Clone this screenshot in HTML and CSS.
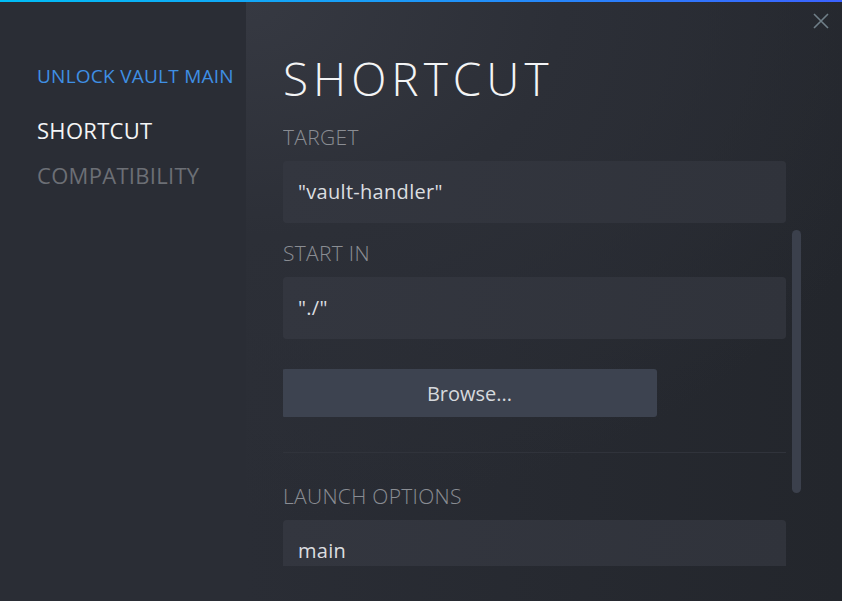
FILE: index.html
```html
<!DOCTYPE html>
<html>
<head>
<meta charset="utf-8">
<link rel="stylesheet" href="styles.css">
</head>
<body>
<div class="window">
  <div class="accent"></div>
  <div class="body">
    <nav class="sidebar">
      <div class="nav-title">UNLOCK VAULT MAIN</div>
      <div class="nav-item active">SHORTCUT</div>
      <div class="nav-item">COMPATIBILITY</div>
    </nav>
    <main class="main">
      <h1 class="title">SHORTCUT</h1>
      <div class="scroll">
        <div class="content">
          <div class="field">
            <div class="label">TARGET</div>
            <div class="input">"vault-handler"</div>
          </div>
          <div class="field">
            <div class="label">START IN</div>
            <div class="input">"./"</div>
          </div>
          <button class="browse">Browse...</button>
          <div class="divider"></div>
          <div class="field launch">
            <div class="label">LAUNCH OPTIONS</div>
            <div class="input">main</div>
          </div>
        </div>
        <div class="track"><div class="thumb"></div></div>
      </div>
    </main>
  </div>
  <button class="close" aria-label="Close">
    <svg width="16" height="16" viewBox="0 0 16 16"><path d="M1 1 L15 15 M15 1 L1 15" stroke="#6f7f88" stroke-width="1.6" fill="none"/></svg>
  </button>
</div>
</body>
</html>
```
FILE: styles.css
```css
* { box-sizing: border-box; }
html, body { margin: 0; padding: 0; }
body {
  width: 842px;
  height: 601px;
  overflow: hidden;
  background: #24272e;
  font-family: "Open Sans", "Noto Sans", sans-serif;
}
.window {
  position: relative;
  width: 842px;
  height: 601px;
  display: flex;
  flex-direction: column;
}
.accent {
  height: 2px;
  flex: none;
  background: linear-gradient(90deg, #00bdf5 0%, #1a9cf8 45%, #3b62ff 100%);
}
.body {
  flex: 1;
  display: flex;
  min-height: 0;
}
.sidebar {
  width: 246px;
  flex: none;
  background: #2a2d35;
  padding: 59px 0 0 37px;
}
.nav-title {
  font-size: 19px;
  line-height: 30px;
  letter-spacing: 0.25px;
  color: #3f8fe4;
  margin-bottom: 24px;
}
.nav-item {
  font-size: 22px;
  line-height: 30px;
  letter-spacing: 0.3px;
  color: #6c6f75;
  margin-bottom: 15px;
}
.nav-item.active { color: #f4f5f6; }
.main {
  flex: 1;
  min-width: 0;
  padding: 53px 0 0 37px;
  background:
    radial-gradient(ellipse 700px 520px at 0% 0%, #363942 0%, #2c2f37 45%, rgba(36,39,45,0) 100%),
    linear-gradient(90deg, #2a2d35 0%, #23262c 100%);
  background-color: #24272d;
  display: flex;
  flex-direction: column;
}
.title {
  margin: 0 0 12px 0;
  font-size: 46px;
  line-height: 46px;
  font-weight: 300;
  letter-spacing: 5px;
  color: #f3f4f5;
}
.scroll {
  height: 453px;
  flex: none;
  display: flex;
  overflow: hidden;
  gap: 6px;
}
.content {
  width: 503px;
  flex: none;
  padding-top: 12px;
}
.field { margin-bottom: 18px; }
.label {
  font-size: 21px;
  line-height: 24px;
  font-weight: 300;
  letter-spacing: 0.3px;
  color: #8a8d93;
  margin-bottom: 12px;
}
.input {
  height: 62px;
  border-radius: 4px;
  background: linear-gradient(100deg, #33363f 0%, #30333b 100%);
  padding: 0 15px;
  font-size: 20px;
  line-height: 62px;
  letter-spacing: 0.3px;
  color: #dcdee0;
}
.browse {
  display: block;
  margin: 30px 0 0 -1px;
  width: 375px;
  height: 48px;
  border: none;
  border-radius: 3px;
  background: #3d4350;
  color: #d6d9dd;
  font-family: inherit;
  font-size: 20px;
  padding: 0;
}
.divider {
  margin-top: 35px;
  height: 1px;
  background: #30333b;
}
.launch { margin-top: 31px; }
.track {
  width: 9px;
  flex: none;
  padding-top: 117px;
}
.thumb {
  width: 9px;
  height: 263px;
  border-radius: 5px;
  background: #3b404c;
}
.close {
  position: absolute;
  top: 12px;
  right: 12px;
  width: 18px;
  height: 18px;
  padding: 1px;
  border: none;
  background: none;
}
.close svg { display: block; }
```
